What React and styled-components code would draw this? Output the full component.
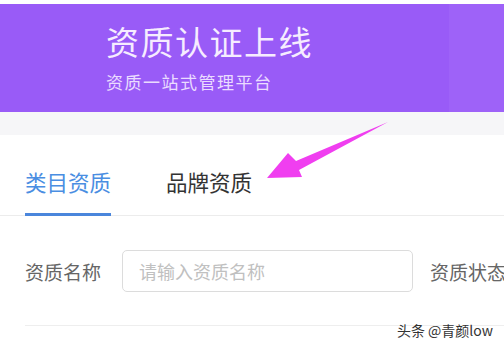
import React from "react";
import styled, { createGlobalStyle } from "styled-components";

const GlobalStyle = createGlobalStyle`
  html, body {
    margin: 0;
    padding: 0;
    background: #fff;
  }
  body {
    font-family: "Noto Sans CJK SC", "Noto Sans", sans-serif;
  }
`;

const Page = styled.div`
  position: relative;
  width: 504px;
  height: 348px;
  overflow: hidden;
  background: #fff;
  padding-top: 4px;
  box-sizing: border-box;
`;

const Banner = styled.div`
  height: 108px;
  background: linear-gradient(to right, #995bf7 0%, #995bf7 89%, #9e62f8 89%, #9e62f8 100%);
  padding: 17px 0 0 106px;
  box-sizing: border-box;
`;

const Title = styled.h1`
  margin: 0;
  font-size: 33px;
  font-weight: 400;
  line-height: 40px;
  color: #f6ecff;
  letter-spacing: 1.5px;
`;

const Subtitle = styled.div`
  margin-top: 10px;
  font-size: 17px;
  line-height: 22px;
  color: #eadbff;
  letter-spacing: 1.5px;
`;

const Gap = styled.div`
  height: 23px;
  background: #f6f6f8;
`;

const Tabs = styled.div`
  display: flex;
  gap: 55px;
  padding: 0 25px;
  height: 80px;
  align-items: flex-end;
  border-bottom: 1px solid #ececec;
`;

const Tab = styled.div`
  font-size: 21.5px;
  line-height: 28px;
  padding-bottom: 17px;
  color: ${(p) => (p.active ? "#4a8ee2" : "#333")};
  border-bottom: 3px solid ${(p) => (p.active ? "#4a86dc" : "transparent")};
  margin-bottom: -1px;
`;

const Filter = styled.div`
  display: flex;
  align-items: center;
  padding: 34px 0 0 25px;
  white-space: nowrap;
`;

const Label = styled.span`
  font-size: 19px;
  color: #666;
  width: 97px;
  flex-shrink: 0;
`;

const Input = styled.input`
  width: 291px;
  height: 42px;
  box-sizing: border-box;
  border: 1px solid #dcdcdc;
  border-radius: 5px;
  padding: 0 16px;
  font-family: inherit;
  font-size: 18px;
  color: #333;
  outline: none;
  flex-shrink: 0;
  &::placeholder {
    color: #c0c0c0;
  }
`;

const StatusLabel = styled(Label)`
  margin-left: 17px;
`;

const Divider = styled.div`
  margin: 33px 0 0 25px;
  height: 1px;
  background: #eeeeee;
`;

const Watermark = styled.div`
  position: absolute;
  right: 11px;
  bottom: 8px;
  font-size: 14px;
  color: #333;
  font-family: "Noto Sans CJK SC", "Liberation Sans", sans-serif;
  text-shadow: 0 0 2px #fff;
`;

const ArrowLayer = styled.svg`
  position: absolute;
  left: 0;
  top: 0;
  pointer-events: none;
`;

export default function App() {
  return (
    <>
      <GlobalStyle />
      <Page>
        <Banner>
          <Title>资质认证上线</Title>
          <Subtitle>资质一站式管理平台</Subtitle>
        </Banner>
        <Gap />
        <Tabs>
          <Tab active>类目资质</Tab>
          <Tab>品牌资质</Tab>
        </Tabs>
        <Filter>
          <Label>资质名称</Label>
          <Input placeholder="请输入资质名称" />
          <StatusLabel>资质状态</StatusLabel>
        </Filter>
        <Divider />
        <Watermark>头条 @青颜low</Watermark>
        <ArrowLayer width="504" height="348" viewBox="0 0 504 348">
          <path
            d="M388 122 L296 161 L288 153 L267 178 L302 177 L299 170 Z"
            fill="#f03ef0"
          />
        </ArrowLayer>
      </Page>
    </>
  );
}
